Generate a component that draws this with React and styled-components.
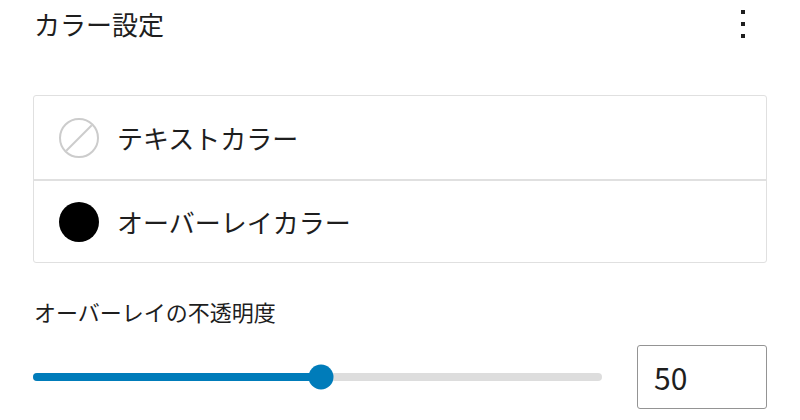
import React from "react";
import styled, { createGlobalStyle } from "styled-components";

const Global = createGlobalStyle`
  html, body { margin: 0; padding: 0; background: #fff; }
  body {
    font-family: "Noto Sans CJK JP", "Noto Sans", sans-serif;
    color: #1e1e1e;
  }
`;

const Panel = styled.div`
  width: 800px;
  height: 420px;
  box-sizing: border-box;
  padding: 0 33px;
  display: flex;
  flex-direction: column;
`;

const Header = styled.div`
  height: 48px;
  display: flex;
  align-items: center;
  justify-content: space-between;
`;

const Title = styled.h2`
  margin: 0 0 0 1px;
  font-size: 26px;
  font-weight: 400;
  line-height: 1;
`;

const Kebab = styled.button`
  border: 0;
  background: none;
  padding: 0;
  margin-right: 22px;
  display: flex;
  flex-direction: column;
  gap: 8px;
  cursor: pointer;
`;

const Dot = styled.span`
  width: 4px;
  height: 4px;
  background: #1e1e1e;
`;

const ColorList = styled.div`
  margin-top: 47px;
  border: 1px solid #e0e0e0;
  border-radius: 3px;
  display: flex;
  flex-direction: column;
`;

const ColorRow = styled.div`
  height: 83px;
  display: flex;
  align-items: center;
  gap: 18px;
  padding: 0 25px;
  & + & {
    border-top: 2px solid #e0e0e0;
    height: 81px;
  }
`;

const Swatch = styled.span`
  width: 40px;
  height: 40px;
  border-radius: 50%;
  box-sizing: border-box;
  flex: none;
  background: ${(p) => p.$color || "transparent"};
  border: ${(p) => (p.$color ? "none" : "2px solid #cccccc")};
  position: relative;
  overflow: hidden;
`;

const Slash = styled.svg`
  position: absolute;
  inset: 0;
`;

const RowLabel = styled.span`
  font-size: 26px;
  line-height: 1;
`;

const FieldLabel = styled.div`
  margin-top: 37px;
  margin-left: 1px;
  font-size: 22px;
  line-height: 1;
`;

const SliderRow = styled.div`
  margin-top: 23px;
  display: flex;
  align-items: center;
  gap: 35px;
`;

const Track = styled.div`
  position: relative;
  flex: 1;
  height: 8px;
  border-radius: 4px;
  background: #dddddd;
`;

const Fill = styled.div`
  height: 100%;
  border-radius: 4px;
  background: #007cba;
`;

const Thumb = styled.div`
  position: absolute;
  top: 50%;
  width: 25px;
  height: 25px;
  border-radius: 50%;
  background: #007cba;
  transform: translate(-50%, -50%);
`;

const NumberBox = styled.div`
  width: 130px;
  height: 64px;
  box-sizing: border-box;
  border: 1px solid #949494;
  border-radius: 3px;
  display: flex;
  align-items: center;
  padding-left: 16px;
  font-size: 30px;
  line-height: 1;
`;

export default function App() {
  const value = 50;
  return (
    <>
      <Global />
      <Panel>
        <Header>
          <Title>カラー設定</Title>
          <Kebab aria-label="menu">
            <Dot />
            <Dot />
            <Dot />
          </Kebab>
        </Header>
        <ColorList>
          <ColorRow>
            <Swatch>
              <Slash viewBox="0 0 36 36" width="36" height="36">
                <line x1="5" y1="31" x2="31" y2="5" stroke="#cccccc" strokeWidth="2" />
              </Slash>
            </Swatch>
            <RowLabel>テキストカラー</RowLabel>
          </ColorRow>
          <ColorRow>
            <Swatch $color="#000" />
            <RowLabel>オーバーレイカラー</RowLabel>
          </ColorRow>
        </ColorList>
        <FieldLabel>オーバーレイの不透明度</FieldLabel>
        <SliderRow>
          <Track>
            <Fill style={{ width: `calc(${value}% + 3px)` }} />
            <Thumb style={{ left: `calc(${value}% + 3px)` }} />
          </Track>
          <NumberBox>{value}</NumberBox>
        </SliderRow>
      </Panel>
    </>
  );
}
